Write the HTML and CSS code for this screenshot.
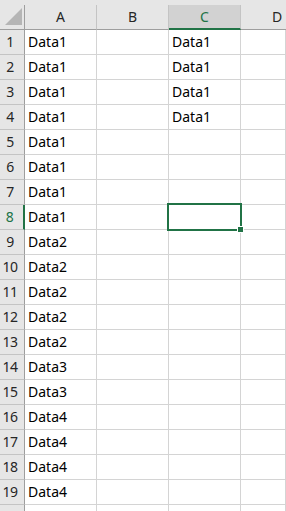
FILE: index.html
```html
<!DOCTYPE html>
<html lang="en">
<head>
    <meta charset="UTF-8">
    <meta name="viewport" content="width=device-width, initial-scale=1.0">
    <title>Sheet1</title>
    <link rel="stylesheet" href="styles.css">
</head>
<body>
    <div class="sheet">
        <div class="corner">
            <svg width="24" height="24" viewBox="0 0 24 24"><polygon points="22,3 22,20 5,20" fill="#b5b5b5"/></svg>
        </div>
        <div class="col-head">A</div>
        <div class="col-head">B</div>
        <div class="col-head active">C</div>
        <div class="col-head last">D</div>

        <div class="row-head">1</div><div class="cell">Data1</div><div class="cell"></div><div class="cell">Data1</div><div class="cell"></div>
        <div class="row-head">2</div><div class="cell">Data1</div><div class="cell"></div><div class="cell">Data1</div><div class="cell"></div>
        <div class="row-head">3</div><div class="cell">Data1</div><div class="cell"></div><div class="cell">Data1</div><div class="cell"></div>
        <div class="row-head">4</div><div class="cell">Data1</div><div class="cell"></div><div class="cell">Data1</div><div class="cell"></div>
        <div class="row-head">5</div><div class="cell">Data1</div><div class="cell"></div><div class="cell"></div><div class="cell"></div>
        <div class="row-head">6</div><div class="cell">Data1</div><div class="cell"></div><div class="cell"></div><div class="cell"></div>
        <div class="row-head">7</div><div class="cell">Data1</div><div class="cell"></div><div class="cell"></div><div class="cell"></div>
        <div class="row-head active">8</div><div class="cell">Data1</div><div class="cell"></div><div class="cell selected"><span class="handle"></span></div><div class="cell"></div>
        <div class="row-head">9</div><div class="cell">Data2</div><div class="cell"></div><div class="cell"></div><div class="cell"></div>
        <div class="row-head">10</div><div class="cell">Data2</div><div class="cell"></div><div class="cell"></div><div class="cell"></div>
        <div class="row-head">11</div><div class="cell">Data2</div><div class="cell"></div><div class="cell"></div><div class="cell"></div>
        <div class="row-head">12</div><div class="cell">Data2</div><div class="cell"></div><div class="cell"></div><div class="cell"></div>
        <div class="row-head">13</div><div class="cell">Data2</div><div class="cell"></div><div class="cell"></div><div class="cell"></div>
        <div class="row-head">14</div><div class="cell">Data3</div><div class="cell"></div><div class="cell"></div><div class="cell"></div>
        <div class="row-head">15</div><div class="cell">Data3</div><div class="cell"></div><div class="cell"></div><div class="cell"></div>
        <div class="row-head">16</div><div class="cell">Data4</div><div class="cell"></div><div class="cell"></div><div class="cell"></div>
        <div class="row-head">17</div><div class="cell">Data4</div><div class="cell"></div><div class="cell"></div><div class="cell"></div>
        <div class="row-head">18</div><div class="cell">Data4</div><div class="cell"></div><div class="cell"></div><div class="cell"></div>
        <div class="row-head">19</div><div class="cell">Data4</div><div class="cell"></div><div class="cell"></div><div class="cell"></div>
        <div class="row-head"></div><div class="cell"></div><div class="cell"></div><div class="cell"></div><div class="cell"></div>
    </div>
</body>
</html>
```

FILE: styles.css
```css
html, body {
    margin: 0;
    padding: 0;
}

body {
    background: #e6e6e6;
    padding-top: 5px;
    width: 286px;
    height: 511px;
    box-sizing: border-box;
    overflow: hidden;
    font-family: "Noto Sans", "Noto Sans CJK JP", sans-serif;
    font-size: 14px;
}

.sheet {
    display: grid;
    grid-template-columns: 25px 72px 72px 72px 45px;
    grid-auto-rows: 25px;
    background: #fff;
}

.sheet > div {
    box-sizing: border-box;
    line-height: 24px;
    white-space: nowrap;
}

.corner {
    background: #e6e6e6;
    border-right: 1px solid #9e9e9e;
    border-bottom: 1px solid #9e9e9e;
}

.corner svg {
    display: block;
}

.col-head {
    background: #e6e6e6;
    color: #262626;
    text-align: center;
    border-right: 1px solid #c4c4c4;
    border-bottom: 1px solid #9e9e9e;
}

.col-head.active {
    background: #d2d2d2;
    color: #217346;
    border-bottom: 2px solid #217346;
}

/* D is cut by the window edge, keep its letter where a full column would put it */
.col-head.last {
    text-align: left;
    padding-left: 31px;
    border-right: none;
}

.row-head {
    background: #e6e6e6;
    color: #262626;
    text-align: center;
    padding-right: 4px;
    border-right: 1px solid #9e9e9e;
    border-bottom: 1px solid #c4c4c4;
    letter-spacing: -0.5px;
}

.row-head.active {
    color: #217346;
    border-right: 2px solid #217346;
}

.cell {
    color: #000;
    padding-left: 3px;
    border-right: 1px solid #d4d4d4;
    border-bottom: 1px solid #d4d4d4;
}

.cell.selected {
    position: relative;
}

.cell.selected::before {
    content: "";
    position: absolute;
    top: -2px;
    left: -2px;
    right: -2px;
    bottom: -2px;
    border: 2px solid #217346;
}

.handle {
    position: absolute;
    right: -4px;
    bottom: -4px;
    width: 5px;
    height: 5px;
    background: #217346;
    border: 1px solid #fff;
    z-index: 1;
}
```
